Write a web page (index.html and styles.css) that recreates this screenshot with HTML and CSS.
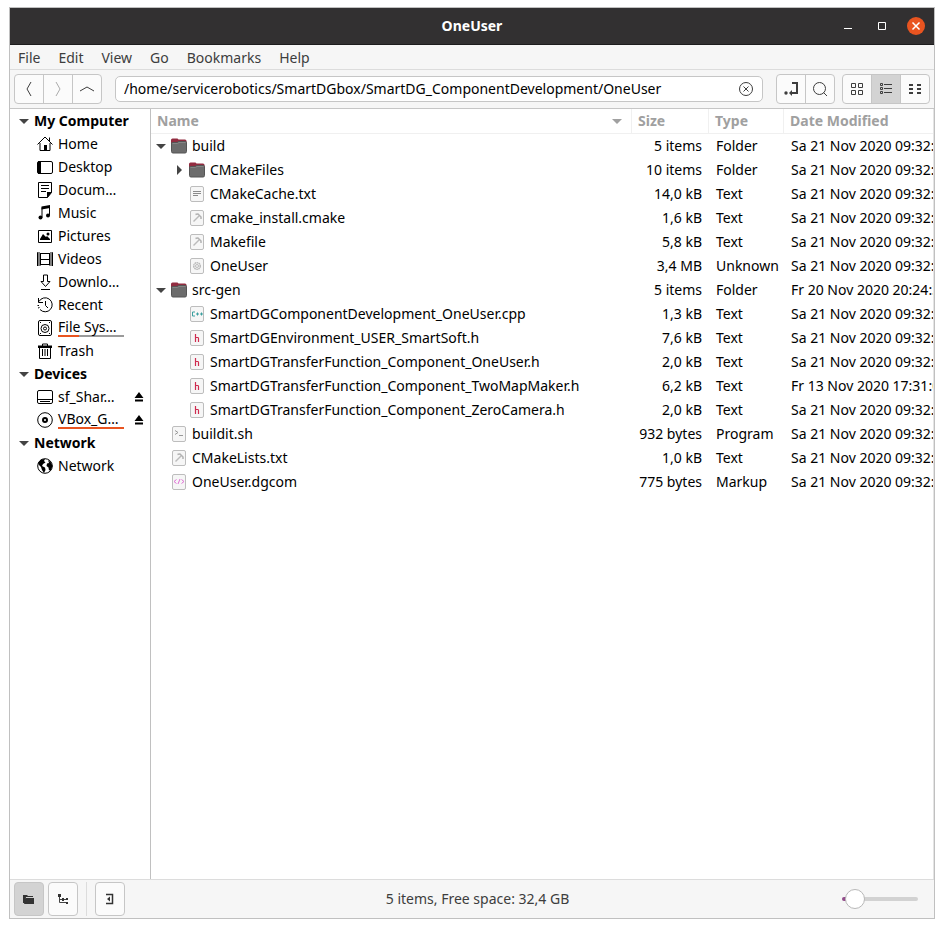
FILE: index.html
```html
<!DOCTYPE html>
<html lang="en">
<head>
<meta charset="utf-8">
<title>OneUser</title>
<link rel="stylesheet" href="styles.css">
</head>
<body>
<svg class="defs" aria-hidden="true">
  <symbol id="folder" viewBox="0 0 16 16"><path d="M0 4V2Q0 .5 1.500 .5H6.500L7.500 1.500H14Q15.500 1.500 15.500 3V7H0Z" fill="#922c40"/><path d="M.5 5Q.5 4.500 1.500 4.500H6L7.500 3.500H14.500Q15.500 3.500 15.500 4.500V13.500Q15.500 15 14 15H2Q.5 15 .5 13.500Z" fill="#6c6c6c" stroke="#555"/><path d="M1.500 5.500H6.500L8 4.500H14.500" fill="none" stroke="#858585"/></symbol>
  <symbol id="sheet" viewBox="0 0 16 16"><rect x="1.500" y=".5" width="13" height="15" rx="1.500" fill="#f6f6f6" stroke="#bdbdbd"/></symbol>
  <symbol id="text" viewBox="0 0 16 16"><use href="#sheet"/><path d="M4 5.500H12M4 7.500H12M4 9.500H9" stroke="#8a8a8a"/></symbol>
  <symbol id="make" viewBox="0 0 16 16"><use href="#sheet"/><path d="M4.500 11.500L10 6" stroke="#bbb" stroke-width="1.500"/><path d="M6.500 4.500Q9 3.500 10 5L12 7V9" fill="none" stroke="#b2b2b2" stroke-width="1.500"/></symbol>
  <symbol id="gear" viewBox="0 0 16 16"><use href="#sheet"/><circle cx="8" cy="8" r="3.300" fill="none" stroke="#bbb" stroke-width="1.500" stroke-dasharray="1.600 .5"/><circle cx="8" cy="8" r="1.500" fill="none" stroke="#bbb"/></symbol>
  <symbol id="cpp" viewBox="0 0 16 16"><use href="#sheet"/><path d="M6 6H3.500V10H6M7 8H10M8.500 6.500V9.500M11 8H14M12.500 6.500V9.500" fill="none" stroke="#3a9f9f"/></symbol>
  <symbol id="header" viewBox="0 0 16 16"><use href="#sheet"/><path d="M6.500 4V12M6.500 7.500H9Q9.500 7.500 9.500 8.500V12" fill="none" stroke="#cf2c50" stroke-width="1.200"/></symbol>
  <symbol id="shell" viewBox="0 0 16 16"><use href="#sheet"/><path d="M4 4.500L7 6.500L4 8.500M8 9.500H12" fill="none" stroke="#999"/></symbol>
  <symbol id="markup" viewBox="0 0 16 16"><use href="#sheet"/><path d="M5.500 5.500L3 7.500L5.500 9.500M10.500 5.500L13 7.500L10.500 9.500M9 5L7 10" fill="none" stroke="#e06fd6"/></symbol>
  <symbol id="down" viewBox="0 0 10 10"><path d="M0 3H10L5 8Z"/></symbol>
  <symbol id="right" viewBox="0 0 10 10"><path d="M3 0V10L8 5Z"/></symbol>
  <symbol id="eject" viewBox="0 0 10 10"><path d="M5 0L9.500 6H.5ZM1 7.500H9V9.500H1Z"/></symbol>
</svg>
<main class="window">
  <header class="titlebar">
    <h1>OneUser</h1>
    <div class="window-controls">
      <button class="control" aria-label="Minimize"><svg width="10" height="10"><path d="M1 7.500H9" stroke="#fff"/></svg></button>
      <button class="control" aria-label="Maximize"><svg width="10" height="10"><path d="M1.500 1.500H8.500V8.500H1.500Z" fill="none" stroke="#fff"/></svg></button>
      <button class="control close" aria-label="Close"><svg width="10" height="10"><path d="M1.500 1.500L8.500 8.500M8.500 1.500L1.500 8.500" stroke="#fff" stroke-width="1.500"/></svg></button>
    </div>
  </header>
  <nav class="menubar" aria-label="Menu">
    <button>File</button><button>Edit</button><button>View</button><button>Go</button><button>Bookmarks</button><button>Help</button>
  </nav>
  <div class="toolbar">
    <div class="group">
      <button aria-label="Back"><svg width="16" height="16"><path d="M10 1L6 8L10 15" class="line"/></svg></button>
      <button aria-label="Forward" disabled><svg width="16" height="16"><path d="M6 1L10 8L6 15" class="line"/></svg></button>
      <button aria-label="Up"><svg width="16" height="16"><path d="M1 10L8 6L15 10" class="line"/></svg></button>
    </div>
    <div class="location">
      <input type="text" aria-label="Location" value="/home/servicerobotics/SmartDGbox/SmartDG_ComponentDevelopment/OneUser">
      <button aria-label="Clear"><svg width="16" height="16"><circle cx="8" cy="8" r="6.500" class="line"/><path d="M5.500 5.500L10.500 10.500M10.500 5.500L5.500 10.500" class="line"/></svg></button>
    </div>
    <div class="tools">
      <div class="group">
        <button aria-label="Toggle location entry"><svg width="16" height="16"><path d="M9 2H14V12H8" fill="none" stroke="#3d3d3d" stroke-width="2"/><path d="M6 12L9 9V15Z" fill="#3d3d3d"/><circle cx="3" cy="12" r="1.700" fill="#3d3d3d"/></svg></button>
        <button aria-label="Search"><svg width="16" height="16"><circle cx="7.500" cy="7.500" r="6" class="line"/><path d="M11.500 11.500L15 15" class="line"/></svg></button>
      </div>
      <div class="group">
        <button aria-label="Icon view"><svg width="16" height="16"><path d="M2.500 2.500H6.500V6.500H2.500ZM9.500 2.500H13.500V6.500H9.500ZM2.500 9.500H6.500V13.500H2.500ZM9.500 9.500H13.500V13.500H9.500Z" class="line"/></svg></button>
        <button aria-label="List view" aria-pressed="true"><svg width="16" height="16"><path d="M2.500 2.500H4.500V4.500H2.500ZM2.500 6.500H4.500V8.500H2.500ZM2.500 10.500H4.500V12.500H2.500ZM6 3.500H14M6 7.500H14M6 11.500H14" class="line"/></svg></button>
        <button aria-label="Compact view"><svg width="16" height="16"><path d="M2 4H6M10 4H14M2 8H6M10 8H14M2 12H6M10 12H14" stroke="#3d3d3d" stroke-width="2"/></svg></button>
      </div>
    </div>
  </div>
  <div class="panes">
    <nav class="sidebar" aria-label="Places">
      <h2><svg class="arrow"><use href="#down"/></svg><span>My Computer</span></h2>
      <a href="#"><svg class="place"><path d="M.5 8.500L8 1L15.500 8.500M12.500 1.500V5M3 7V14.500H13V7" class="ink"/><path d="M7 9H10V15H7Z"/></svg><span>Home</span></a>
      <a href="#"><svg class="place"><rect x=".5" y="2.500" width="15" height="12" rx="1.500" class="ink"/><path d="M1 2H4V15H1Z"/></svg><span>Desktop</span></a>
      <a href="#"><svg class="place"><path d="M1.500 .5H14.500V10.500L10.500 15.500H1.500ZM4 3.500H12M4 6.500H12M4 9.500H9" class="ink"/><path d="M10 10H15L10 16Z"/></svg><span>Docum…</span></a>
      <a href="#"><svg class="place"><path d="M5 12.500V2.500M12.500 1.500V10.500" class="ink"/><path d="M4.500 1.500L13 0V3L4.500 4.500Z"/><circle cx="3.500" cy="12.500" r="2"/><circle cx="11" cy="10.500" r="2"/></svg><span>Music</span></a>
      <a href="#"><svg class="place"><path d="M1.500 2.500H14.500V14.500H1.500Z" class="ink"/><path d="M3 12V11L6 6L9 9L10 8L13 11V12Z"/><circle cx="11" cy="6" r="1.500"/></svg><span>Pictures</span></a>
      <a href="#"><svg class="place"><path d="M3.500 2V14.500M12.500 2V14.500M3 2.500H13M3 8.500H13M3 13.500H13" class="ink"/><path d="M1.500 1.500V15M14.500 1.500V15" stroke="#000" stroke-width="3" stroke-dasharray="1 1"/><path d="M.5 1.500V15M15.500 1.500V15" class="ink"/></svg><span>Videos</span></a>
      <a href="#"><svg class="place"><path d="M6.500 1V7.500H4L8.500 12.500L13 7.500H10.500V1ZM4 15.500H13" class="ink"/></svg><span>Downlo…</span></a>
      <a href="#"><svg class="place"><path d="M2 4.500A7 7 0 1 1 3 12.500M1.500 1V5.500H6M8.500 4V8.500L11 11" class="ink"/><path d="M.5 8.500H2M1 11L2.500 10.500" class="ink"/></svg><span>Recent</span></a>
      <a href="#"><svg class="place"><rect x="1.500" y=".5" width="13" height="15" rx="1.500" class="ink"/><circle cx="8" cy="8.500" r="4" class="ink"/><circle cx="8" cy="8.500" r="1.500" class="ink"/><path d="M3 2H4V3H3ZM12 2H13V3H12ZM3 13H4V14H3ZM12 13H13V14H12Z"/></svg><span class="usage">File Sys…</span></a>
      <a href="#"><svg class="place"><path d="M5.500 3V1H10.500V3M2.500 4V15.500H13.500V4M5.500 6V13M8 6V13M10.500 6V13" class="ink"/><path d="M1 2.500H15V5H1Z"/></svg><span>Trash</span></a>
      <h2><svg class="arrow"><use href="#down"/></svg><span>Devices</span></h2>
      <div class="device"><a href="#"><svg class="place"><rect x=".5" y="1.500" width="15" height="13" rx="1.500" class="ink"/><path d="M1 10.500H15M3 12.500H13" class="ink"/></svg><span>sf_Shar…</span></a><button aria-label="Eject sf_Shared"><svg><use href="#eject"/></svg></button></div>
      <div class="device"><a href="#"><svg class="place"><circle cx="8" cy="8" r="7.300" class="ink"/><circle cx="8" cy="8" r="2" class="ink thick"/></svg><span class="usage full">VBox_G…</span></a><button aria-label="Eject VBox"><svg><use href="#eject"/></svg></button></div>
      <h2><svg class="arrow"><use href="#down"/></svg><span>Network</span></h2>
      <a href="#"><svg class="place"><circle cx="8" cy="8" r="7.300" class="ink"/><path d="M1 5L4 1.500L8 1L7 3L8.500 4.500L6 6L5 8L8 9.500L8.500 12L7 15L5 12L4 9L2 7ZM11 2L14 4.500L15.500 8L14 12L12 12.500L11.500 9.500L9.500 8L10 5.500L12 5Z"/></svg><span>Network</span></a>
    </nav>
    <div class="listing">
      <table>
        <colgroup><col><col class="c-size"><col class="c-type"><col class="c-date"></colgroup>
        <thead><tr><th><div class="sort"><span>Name</span><svg class="arrow"><use href="#down"/></svg></div></th><th>Size</th><th>Type</th><th>Date Modified</th></tr></thead>
        <tbody>
          <tr><td><div class="file"><svg class="arrow"><use href="#down"/></svg><svg class="icon"><use href="#folder"/></svg><span>build</span></div></td><td>5 items</td><td>Folder</td><td>Sa 21 Nov 2020 09:32:</td></tr>
          <tr><td><div class="file nested"><svg class="arrow"><use href="#right"/></svg><svg class="icon"><use href="#folder"/></svg><span>CMakeFiles</span></div></td><td>10 items</td><td>Folder</td><td>Sa 21 Nov 2020 09:32:</td></tr>
          <tr><td><div class="file nested leaf"><svg class="icon"><use href="#text"/></svg><span>CMakeCache.txt</span></div></td><td>14,0 kB</td><td>Text</td><td>Sa 21 Nov 2020 09:32:</td></tr>
          <tr><td><div class="file nested leaf"><svg class="icon"><use href="#make"/></svg><span>cmake_install.cmake</span></div></td><td>1,6 kB</td><td>Text</td><td>Sa 21 Nov 2020 09:32:</td></tr>
          <tr><td><div class="file nested leaf"><svg class="icon"><use href="#make"/></svg><span>Makefile</span></div></td><td>5,8 kB</td><td>Text</td><td>Sa 21 Nov 2020 09:32:</td></tr>
          <tr><td><div class="file nested leaf"><svg class="icon"><use href="#gear"/></svg><span>OneUser</span></div></td><td>3,4 MB</td><td>Unknown</td><td>Sa 21 Nov 2020 09:32:</td></tr>
          <tr><td><div class="file"><svg class="arrow"><use href="#down"/></svg><svg class="icon"><use href="#folder"/></svg><span>src-gen</span></div></td><td>5 items</td><td>Folder</td><td>Fr 20 Nov 2020 20:24:3</td></tr>
          <tr><td><div class="file nested leaf"><svg class="icon"><use href="#cpp"/></svg><span>SmartDGComponentDevelopment_OneUser.cpp</span></div></td><td>1,3 kB</td><td>Text</td><td>Sa 21 Nov 2020 09:32:</td></tr>
          <tr><td><div class="file nested leaf"><svg class="icon"><use href="#header"/></svg><span>SmartDGEnvironment_USER_SmartSoft.h</span></div></td><td>7,6 kB</td><td>Text</td><td>Sa 21 Nov 2020 09:32:</td></tr>
          <tr><td><div class="file nested leaf"><svg class="icon"><use href="#header"/></svg><span>SmartDGTransferFunction_Component_OneUser.h</span></div></td><td>2,0 kB</td><td>Text</td><td>Sa 21 Nov 2020 09:32:</td></tr>
          <tr><td><div class="file nested leaf"><svg class="icon"><use href="#header"/></svg><span>SmartDGTransferFunction_Component_TwoMapMaker.h</span></div></td><td>6,2 kB</td><td>Text</td><td>Fr 13 Nov 2020 17:31:0</td></tr>
          <tr><td><div class="file nested leaf"><svg class="icon"><use href="#header"/></svg><span>SmartDGTransferFunction_Component_ZeroCamera.h</span></div></td><td>2,0 kB</td><td>Text</td><td>Sa 21 Nov 2020 09:32:</td></tr>
          <tr><td><div class="file leaf"><svg class="icon"><use href="#shell"/></svg><span>buildit.sh</span></div></td><td>932 bytes</td><td>Program</td><td>Sa 21 Nov 2020 09:32:</td></tr>
          <tr><td><div class="file leaf"><svg class="icon"><use href="#make"/></svg><span>CMakeLists.txt</span></div></td><td>1,0 kB</td><td>Text</td><td>Sa 21 Nov 2020 09:32:</td></tr>
          <tr><td><div class="file leaf"><svg class="icon"><use href="#markup"/></svg><span>OneUser.dgcom</span></div></td><td>775 bytes</td><td>Markup</td><td>Sa 21 Nov 2020 09:32:</td></tr>
        </tbody>
      </table>
    </div>
  </div>
  <footer class="statusbar">
    <div class="side-buttons">
      <button aria-label="Places" aria-pressed="true"><svg width="16" height="16"><path d="M2 4H6L7 5H12V6H5L4 12H2ZM5 7H13V13H3Z" fill="#333"/></svg></button>
      <button aria-label="Treeview"><svg width="16" height="16"><path d="M4.500 5V11.500H12M5 8.500H12" fill="none" stroke="#444"/><path d="M3 3H6V6H3ZM7 7H9V10H7ZM11 7H13V9H11ZM11 11H13V13H11Z" fill="#333"/></svg></button>
      <hr>
      <button aria-label="Hide the sidebar"><svg width="16" height="16"><path d="M4 3.500H10.500V12.500H4" fill="none" stroke="#333" stroke-width="1.500"/><path d="M8 5.500L5 8L8 10.500Z" fill="#333"/></svg></button>
    </div>
    <p>5 items, Free space: 32,4 GB</p>
    <div class="zoom"><input type="range" aria-label="Zoom" min="0" max="100" value="5"></div>
  </footer>
</main>
</body>
</html>
```
FILE: styles.css
```css
* { box-sizing: border-box; }
body {
  margin: 0;
  padding: 7px 9px 9px;
  height: 100vh;
  background: #fff;
  color: #000;
  font: 14px/20px "Noto Sans", "Open Sans", sans-serif;
}
button { font: inherit; color: inherit; margin: 0; padding: 0; border: 0; background: none; }
.defs { position: absolute; width: 0; height: 0; }
.window { height: 100%; display: flex; flex-direction: column; border: 1px solid #c0c0c0; background: #f6f6f6; overflow: hidden; }

.titlebar { display: grid; grid-template-columns: 1fr auto 1fr; align-items: center; height: 37px; background: #323031; border-bottom: 1px solid #1d1c1d; color: #fff; }
.titlebar h1 { grid-column: 2; margin: 0; font-size: 14px; line-height: 20px; }
.window-controls { display: flex; justify-content: flex-end; align-items: center; gap: 16px; padding-right: 9px; }
.control { display: grid; place-items: center; width: 18px; height: 18px; border-radius: 50%; }
.control.close { background: #e95420; }

.menubar { display: flex; gap: 18px; height: 25px; padding: 2px 8px 0; align-items: center; color: #3d3d3d; border-bottom: 1px solid #dcdcdc; }

.toolbar { display: flex; align-items: center; gap: 13px; height: 39px; padding: 0 4px; border-bottom: 1px solid #c6c6c6; color: #3d3d3d; }
.line { fill: none; stroke: #3d3d3d; }
.group { display: flex; flex: none; height: 30px; border: 1px solid #c6c6c6; border-radius: 4px; background: #fbfbfb; overflow: hidden; }
.group button { display: grid; place-items: center; width: 29px; }
.group button:first-child { width: 28px; }
.group button + button { border-left: 1px solid #c6c6c6; }
.group button[aria-pressed] { background: #d3d3d3; }
.group button:disabled .line { stroke: #aaa; }
.location { flex: 1; display: flex; align-items: center; min-width: 0; height: 26px; padding: 0 8px; border: 1px solid #c6c6c6; border-radius: 5px; background: #fff; }
.location input { flex: 1; min-width: 0; height: 20px; border: 0; padding: 0; background: none; font: inherit; color: #000; outline: 0; }
.location button { display: grid; }
.tools { display: flex; gap: 7px; }

.panes { flex: 1; display: flex; min-height: 0; background: #fff; }
.sidebar { flex: none; width: 141px; padding-left: 9px; border-right: 1px solid #c0c0c0; overflow: hidden; }
.sidebar h2 { display: flex; align-items: center; gap: 5px; width: 109px; height: 23px; margin: 0; font-size: 14px; white-space: nowrap; }
.arrow { flex: none; width: 10px; height: 10px; fill: #444; }
.sidebar a { display: flex; align-items: center; gap: 5px; height: 23px; padding-left: 18px; color: #000; text-decoration: none; white-space: nowrap; }
.place { flex: none; width: 16px; height: 16px; }
.ink { fill: none; stroke: #000; }
.thick { stroke-width: 2; }
.usage { width: 66px; line-height: 16px; border-bottom: 2px solid; border-image: linear-gradient(90deg, #e95420 32%, #9a9a9a 32%) 1; }
.usage.full { border-image: linear-gradient(#e95420, #e95420) 1; }
.device { display: flex; align-items: center; justify-content: space-between; padding-right: 6px; }
.device button, .device button svg { display: block; width: 10px; height: 10px; }

.listing { flex: 1; min-width: 0; overflow: hidden; border-right: 1px solid #e4e4e4; }
table { width: 100%; table-layout: fixed; border-collapse: separate; border-spacing: 0; }
.c-size { width: 77px; }
.c-type { width: 75px; }
.c-date { width: 150px; }
th, td { height: 24px; padding: 0 0 0 8px; text-align: left; white-space: nowrap; overflow: hidden; }
th { height: 25px; padding-left: 6px; color: #a0a0a0; border-bottom: 1px solid #f0f0f0; }
th + th { border-left: 1px solid #f0f0f0; }
th .arrow { fill: #a0a0a0; }
.sort { display: flex; align-items: center; justify-content: space-between; padding-right: 9px; }
td:first-child { padding-left: 5px; }
td:nth-child(2) { padding: 0 6px 0 0; text-align: right; }
.file { display: flex; align-items: center; gap: 5px; }
.nested { padding-left: 18px; }
.leaf { padding-left: 15px; }
.nested.leaf { padding-left: 33px; }
.icon { flex: none; width: 16px; height: 16px; }

.statusbar { display: flex; align-items: center; height: 39px; padding: 0 16px 0 4px; border-top: 1px solid #dcdcdc; color: #3d3d3d; }
.statusbar p { flex: 1; margin: 0; text-align: center; }
.side-buttons { display: flex; gap: 4px; }
.side-buttons button { display: grid; place-items: center; width: 30px; height: 34px; border: 1px solid #c6c6c6; border-radius: 4px; background: #fbfbfb; }
.side-buttons button[aria-pressed] { background: #d3d3d3; }
.side-buttons hr { width: 1px; margin: 0 4px; border: 0; background: #dcdcdc; }
.zoom { display: flex; margin-left: 12px; }
.zoom input { appearance: none; width: 76px; height: 20px; margin: 0; background: none; }
.zoom input::-webkit-slider-runnable-track { height: 4px; border-radius: 2px; background: linear-gradient(90deg, #924d8b 8px, #d2d2d2 8px); }
.zoom input::-webkit-slider-thumb { appearance: none; width: 20px; height: 20px; margin-top: -8px; border: 1px solid #b8b8b8; border-radius: 50%; background: #fff; }
```
